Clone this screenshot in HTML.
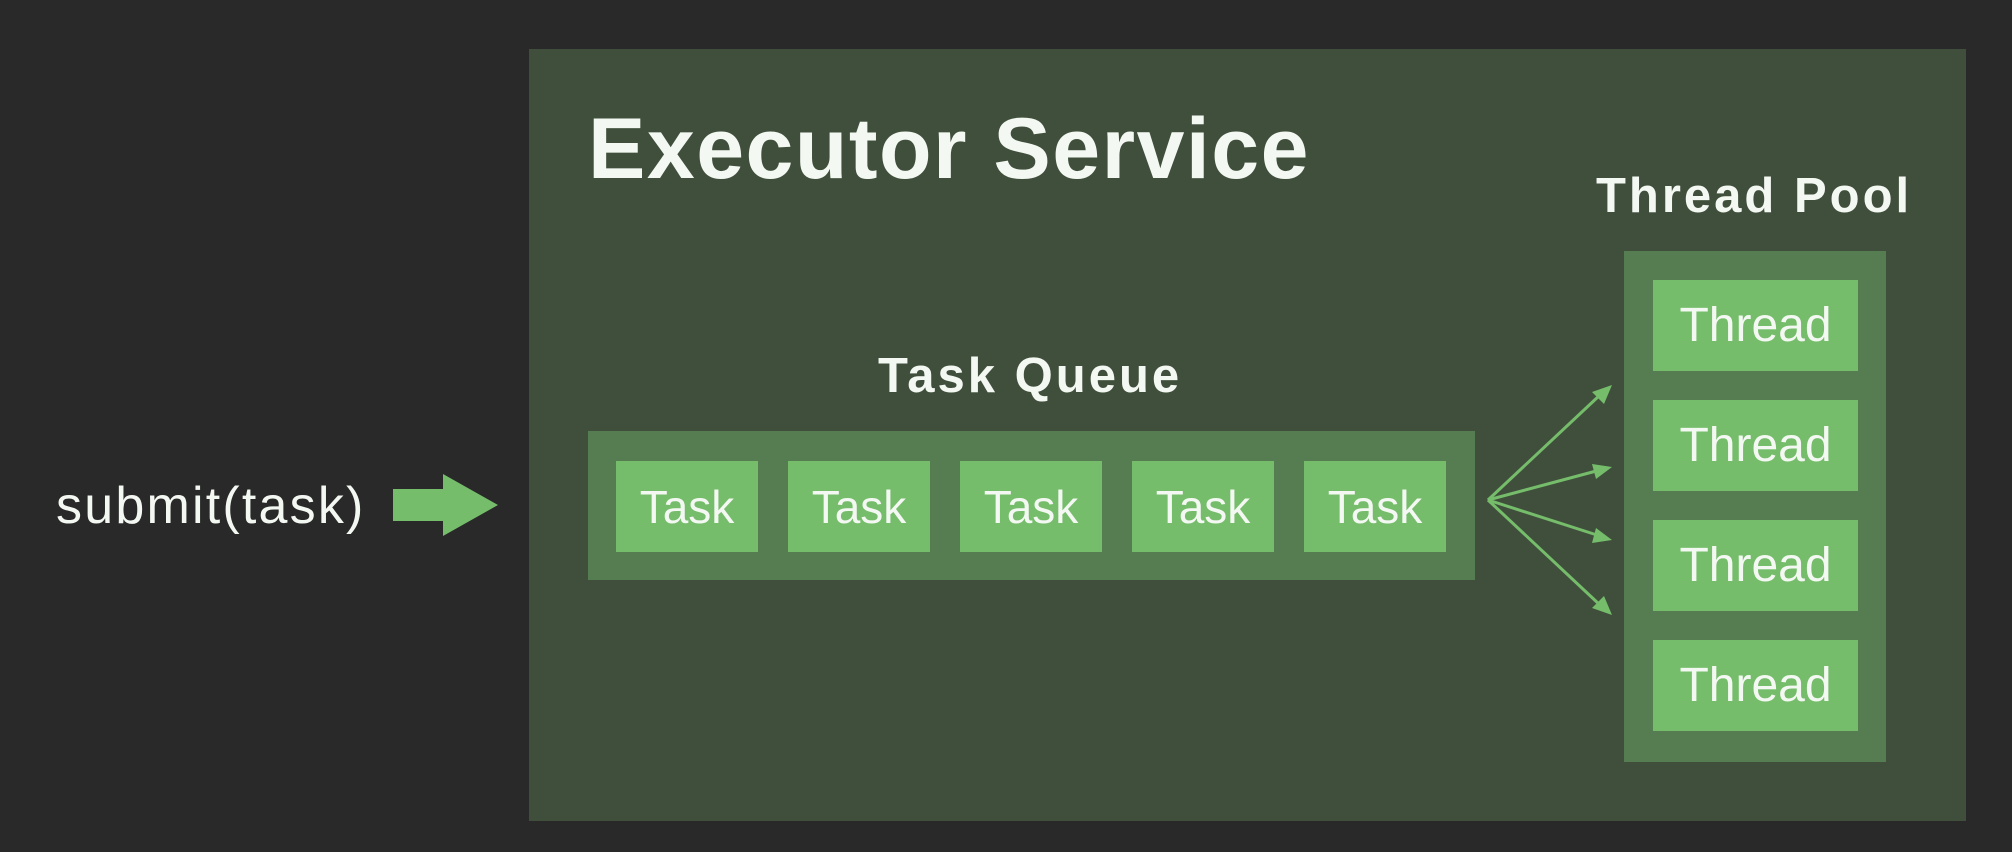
<!DOCTYPE html>
<html><head><style>
body{margin:0;width:2012px;height:852px;background:#292929;position:relative;overflow:hidden;font-family:"Liberation Sans",sans-serif;color:#f4f8f2}
.a{position:absolute}
.box{left:529px;top:49px;width:1437px;height:772px;background:#404f3c}
.cont{background:#567d51}
.tile{background:#75bd6b;display:flex;align-items:center;justify-content:center;font-size:46px;letter-spacing:0px}
</style></head><body>
<div class="a box"></div>
<div class="a" style="left:588px;top:100px;font-size:86px;font-weight:bold;letter-spacing:1.5px">Executor Service</div>
<div class="a" style="left:1596px;top:168px;font-size:49px;font-weight:bold;letter-spacing:3px">Thread Pool</div>
<div class="a" style="left:878px;top:348px;font-size:49px;font-weight:bold;letter-spacing:3px">Task Queue</div>
<div class="a cont" style="left:588px;top:431px;width:887px;height:149px"></div>
<div class="a tile" style="left:616px;top:461px;width:142px;height:91px">Task</div>
<div class="a tile" style="left:788px;top:461px;width:142px;height:91px">Task</div>
<div class="a tile" style="left:960px;top:461px;width:142px;height:91px">Task</div>
<div class="a tile" style="left:1132px;top:461px;width:142px;height:91px">Task</div>
<div class="a tile" style="left:1304px;top:461px;width:142px;height:91px">Task</div>
<div class="a cont" style="left:1624px;top:251px;width:262px;height:511px"></div>
<div class="a tile" style="left:1653px;top:280px;width:205px;height:91px;font-size:48px">Thread</div>
<div class="a tile" style="left:1653px;top:400px;width:205px;height:91px;font-size:48px">Thread</div>
<div class="a tile" style="left:1653px;top:520px;width:205px;height:91px;font-size:48px">Thread</div>
<div class="a tile" style="left:1653px;top:640px;width:205px;height:91px;font-size:48px">Thread</div>
<svg class="a" style="left:0;top:0" width="2012" height="852">
<g stroke="#75bd6b" stroke-width="3" fill="#75bd6b">
<line x1="1488" y1="500" x2="1600" y2="395"/>
<line x1="1488" y1="500" x2="1600" y2="470"/>
<line x1="1488" y1="500" x2="1600" y2="536"/>
<line x1="1488" y1="500" x2="1600" y2="605"/>
</g>
<g fill="#75bd6b">
<polygon points="1612,385 1592,392 1604,404"/>
<polygon points="1612,467 1592,464 1596,479"/>
<polygon points="1612,540 1596,528 1592,543"/>
<polygon points="1612,615 1604,596 1592,608"/>
<polygon points="393,489 443,489 443,474 498,505 443,536 443,521 393,521"/>
</g>
</svg>
<div class="a" style="left:56px;top:476px;font-size:52px;letter-spacing:2.2px">submit(task)</div>
</body></html>
